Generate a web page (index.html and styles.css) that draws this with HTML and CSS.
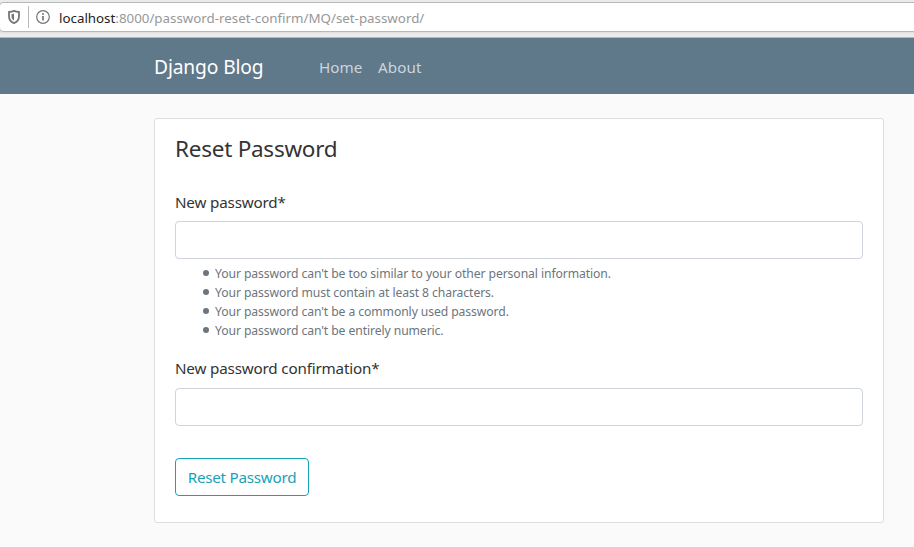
FILE: index.html
```html
<!DOCTYPE html>
<html lang="en">
<head>
<meta charset="utf-8">
<title>Reset Password</title>
<link rel="stylesheet" href="styles.css">
</head>
<body>
<div class="toolbar">
  <div class="address-bar">
    <svg class="shield" width="12" height="14" viewBox="0 0 12 14"><path d="M6 .9C4.800 1.500 3 1.900 1 2v4.200C1 9.500 2.900 12 6 13.100 9.100 12 11 9.500 11 6.200V2C9 1.900 7.200 1.500 6 .9Z" fill="none" stroke="#737679" stroke-width="1.800"/><path d="M6 3.500C5.200 3.900 4.400 4.100 3.500 4.200V6.500C3.500 8.300 4.400 9.700 6 10.500Z" fill="#737679"/></svg>
    <span class="divider"></span>
    <svg class="info" width="14" height="14" viewBox="0 0 14 14"><circle cx="7" cy="7" r="6.300" fill="none" stroke="#737679" stroke-width="1.200"/><circle cx="7" cy="4" r="1" fill="#737679"/><path d="M7 6v4.600" stroke="#737679" stroke-width="1.700"/></svg>
    <span class="url"><span class="host">localhost</span>:8000/password-reset-confirm/MQ/set-password/</span>
  </div>
</div>
<nav class="navbar">
  <a class="brand">Django Blog</a>
  <a class="nav-link home">Home</a>
  <a class="nav-link about">About</a>
</nav>
<main class="card">
  <form>
    <h1 class="title">Reset Password</h1>
    <label class="label" for="p1">New password*</label>
    <input class="field" id="p1" type="password">
    <ul class="hints">
      <li>Your password can't be too similar to your other personal information.</li>
      <li>Your password must contain at least 8 characters.</li>
      <li>Your password can't be a commonly used password.</li>
      <li>Your password can't be entirely numeric.</li>
    </ul>
    <label class="label label-confirm" for="p2">New password confirmation*</label>
    <input class="field" id="p2" type="password">
    <button class="submit" type="button">Reset Password</button>
  </form>
</main>
</body>
</html>
```
FILE: styles.css
```css
* { box-sizing: border-box; }
body {
  margin: 0;
  background: #fafafa;
  color: #333;
  font: 15.200px/24px "Noto Sans", "Open Sans", sans-serif;
  overflow: hidden;
}
.toolbar {
  height: 38px;
  padding-top: 2px;
  background: #ebebeb;
  border-bottom: 1px solid #b5b8ba;
}
.address-bar {
  display: flex;
  align-items: center;
  height: 30px;
  margin: 0 -6px 0 -1px;
  padding-left: 9px;
  background: #fff;
  border: 1px solid #b8b8b8;
  border-radius: 4px;
  box-shadow: 0 1px 2px rgba(0, 0, 0, .06);
}
.shield { margin-left: -1px; }
.divider { width: 1px; height: 22px; margin: 0 7px 0 8px; background: #bbb; }
.url {
  margin: 2px 0 0 9px;
  color: #989898;
  font: 13.330px/20px "Noto Sans", sans-serif;
  white-space: nowrap;
}
.host { color: #222; }
.navbar {
  display: flex;
  align-items: center;
  height: 56px;
  padding: 2px 0 0 154px;
  background: #5f788a;
  white-space: nowrap;
}
.brand { width: 165px; color: #fff; font-size: 19.200px; letter-spacing: -.12px; }
.nav-link { color: #cbd5db; }
.home { width: 59px; }
.about { letter-spacing: .1px; }
.card {
  width: 730px;
  height: 405px;
  margin: 24px 0 0 154px;
  padding: 15px 20px;
  background: #fff;
  border: 1px solid #ddd;
  border-radius: 3px;
}
.title { margin: 0 0 26px; font-size: 22.500px; line-height: 30px; font-weight: 400; letter-spacing: -.25px; }
.label { display: block; height: 24px; margin-bottom: 7px; letter-spacing: -.17px; }
.label-confirm { margin-bottom: 8px; }
.field {
  display: block;
  width: 688px;
  height: 38px;
  border: 1px solid #ced4da;
  border-radius: 4px;
  background: #fff;
  outline: none;
}
.hints {
  margin: 5px 0 16px;
  padding-left: 40px;
  color: #6c757d;
  font-size: 12.200px;
  line-height: 19px;
  letter-spacing: -.1px;
  list-style: none;
}
.hints li { display: flex; align-items: center; }
.hints li::before {
  content: "";
  width: 6px;
  height: 6px;
  margin: -1px 6px 0 -12px;
  border-radius: 50%;
  background: #6c757d;
}
.submit {
  display: block;
  width: 134px;
  height: 38px;
  margin-top: 32px;
  padding: 0;
  color: #17a2b8;
  background: #fff;
  border: 1px solid #17a2b8;
  border-radius: 4px;
  font: inherit;
  letter-spacing: -.24px;
  white-space: nowrap;
}
```
